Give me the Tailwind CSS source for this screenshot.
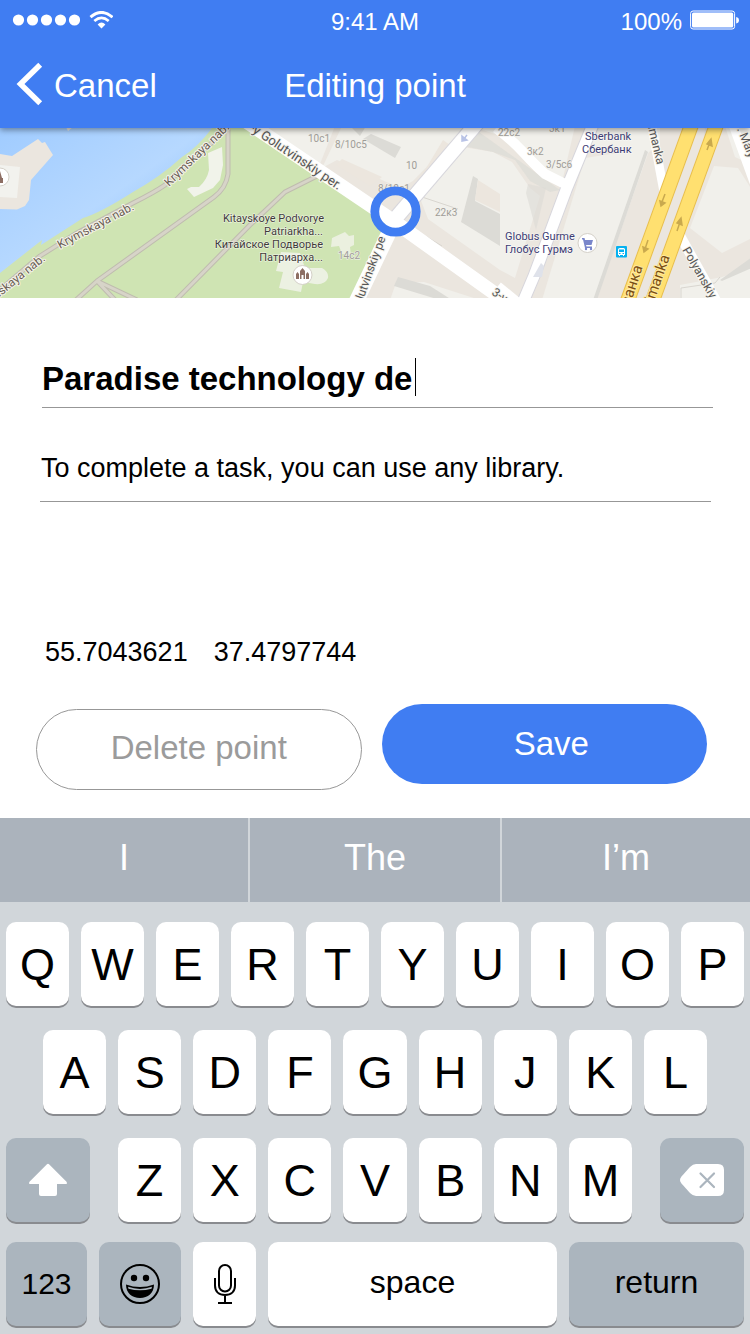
<!DOCTYPE html>
<html lang="en">
<head>
<meta charset="utf-8">
<meta name="viewport" content="width=device-width, initial-scale=1">
<title>Editing point</title>
<script src="https://cdn.jsdelivr.net/npm/@tailwindcss/browser@4"></script>
</head>
<body class="flex min-h-screen flex-col bg-white font-['Liberation_Sans',Arial,sans-serif] text-black">

<header class="relative z-10 flex h-32 flex-col bg-[#407df2] text-white shadow-[0_2px_6px_rgba(0,0,0,0.4)]">
  <div class="grid h-11 grid-cols-[1fr_auto_1fr] items-center px-3 text-[24px] leading-6">
    <div class="flex items-center gap-2 pb-1">
      <svg class="h-3 w-[68px]" viewBox="0 0 68 12" fill="#fff" aria-label="Signal"><circle cx="6.5" cy="6" r="5.6"/><circle cx="20.500" cy="6" r="5.600"/><circle cx="34.500" cy="6" r="5.600"/><circle cx="48.500" cy="6" r="5.600"/><circle cx="62.500" cy="6" r="5.600"/></svg>
      <svg class="h-[18px] w-[25px]" viewBox="0 0 25 18" fill="none" stroke="#fff" aria-label="Wi-Fi"><path d="M2.500 6.200Q13.500-3.400 24.500 6.200" stroke-width="2.900"/><path d="M6.300 10Q13.500 3.800 20.700 10" stroke-width="2.700"/><path d="M9.600 13.500Q13.500 9.700 17.400 13.500L13.500 17.600Z" fill="#fff" stroke="none"/></svg>
    </div>
    <span>9:41 AM</span>
    <div class="flex items-center justify-end gap-2">
      <span>100%</span>
      <svg class="mb-1 -mr-0.5 h-5 w-[50px]" viewBox="0 0 50 20" fill="none" aria-label="Battery full"><rect x=".6" y="1" width="44" height="18" rx="2.500" stroke="#fff"/><rect x="2" y="2.500" width="41.200" height="15" rx="1.500" fill="#fff"/><path d="M46.200 7a3.300 3.300 0 0 1 0 6.500z" fill="#fff"/></svg>
    </div>
  </div>
  <div class="grid h-20 grid-cols-[1fr_auto_1fr] items-center px-4 text-[33px] leading-10">
    <button type="button" class="flex items-center gap-[11px] justify-self-start">
      <svg class="h-[44px] w-[27px]" viewBox="0 0 27 44" fill="none" stroke="#fff" stroke-width="5.500"><path d="M24.200 2.800L4.500 22L24.200 41.200"/></svg>
      <span class="pt-1">Cancel</span>
    </button>
    <h1 class="pt-1">Editing point</h1>
  </div>
</header>

<main class="flex flex-1 flex-col">
  <svg class="h-[170px] w-full" viewBox="0 128 750 170" preserveAspectRatio="xMidYMid slice" font-family="Roboto, sans-serif" role="img" aria-label="Map around the point">
    <defs>
      <linearGradient id="water" x1="0" y1="0" x2="1" y2="1"><stop offset="0" stop-color="#9fcbff"/><stop offset=".5" stop-color="#b6d8ff"/><stop offset=".75" stop-color="#9ac6fb"/></linearGradient>
    </defs>
    <rect y="120" width="750" height="186" fill="#ebe6df"/>
    <!-- park -->
    <path d="M0 120H245L375 212L392 228L358 300H0Z" fill="#cfe4b3"/>
    <!-- river -->
    <path d="M0 120H218Q200 146 182 157Q160 177 133 192Q100 213 83 218L55 236L41 245L42 240L0 273Z" fill="url(#water)"/>
    <path d="M66 127H73L68 131Z" fill="#ebe6df"/>
    <path d="M0 154L12 156L38 139L42 143L45 142L53 155L31 180L29 200L25 206L17 209.500L0 209Z" fill="#ebe6df"/>
    <path d="M0 165L20 167L17 198L0 197Z" fill="#f2f2ee"/>
    <!-- park buildings -->
    <g fill="#f1f3ea"><path d="M187 189L194 197L213 188L220 180L223 165L222 147L208 153L209 170Q207 180 199 187L191 187Z"/>
    <path d="M281 252L300 253L305 268L322 268Q329 272 328 278Q325 285 315 284L303 282L301 292L279 288L283 272L276 271Z" opacity=".85"/>
    <path d="M332 238L345 232L349 236L354 235L354 245L350 247L351 255L342 254L339 246L331 247Z" opacity=".8"/></g>
    <!-- park paths -->
    <g fill="none" stroke="#bfbcaf" stroke-width="5" stroke-linejoin="round"><path d="M-5 294L40 256L75 234L133 203Q155 192 165 185L226 130"/><path d="M228 126V174Q226 188 214 197L97 281L76 300M97 281L137 300M97 281L116 301M176 300L250 225L285 192L319 175"/></g>
    <g fill="none" stroke="#d7d4c8" stroke-width="3" stroke-linejoin="round"><path d="M-5 294L40 256L75 234L133 203Q155 192 165 185L226 130"/><path d="M228 126V174Q226 188 214 197L97 281L76 300M97 281L137 300M97 281L116 301M176 300L250 225L285 192L319 175"/></g>
    <!-- city blocks -->
    <g fill="#f1f0eb">
      <path d="M266 126H335L320 164L280 138Z"/><path d="M342 126H467L413 181L400 188L337 160L322 168Z"/>
      <path d="M420 198L463 147L493 152L512 162L530 188L540 196L515 278L500 270L428 219Z"/>
      <path d="M470 126H560L575 126L563 178L546 170L520 142Z"/>
      <path d="M585 158L650 148L596 300H542Z"/>
      <path d="M600 124H660V144L641 158L620 150L586 152Z"/>
      <path d="M690 228L714 166L738 168L752 190V238L722 253Z"/>
      <path d="M396 283L424 282L480 300H390Z"/>
      <path d="M680 285L722 277L752 267V300H680Z"/>
      <path d="M725 126H752V165L735 157Z"/>
    </g>
    <g fill="#dcdbd6">
      <path d="M363 139L371 134L401 147L395 158Z"/><path d="M350 126H366L360 136Z"/>
      <path d="M472 127L560 190L550 192L530 181L515 160L493 152L463 146Z" opacity=".7"/>
      <path d="M473 176L478 179L475 201L500 214V246L461 222Z"/>
      <path d="M398 277L430 286L452 300H440L394 286Z"/>
      <path d="M528 184L546 188L536 230L526 193Z" opacity=".6"/>
      <path d="M645 150L648 152L597 300H593Z"/>
      <path d="M720 280L752 257V268L722 281Z"/>
      <path d="M705 126H716L702 170Z" opacity=".6"/>
    </g>
    <g fill="#ece6de"><path d="M342 159L382 177L370 186L336 165Z"/><path d="M478 180L500 194V212L475 200Z"/><path d="M425 170L443 140L450 145L415 185Z"/></g>
    <path d="M422 197L458 209M427 237L442 246M681 300V288L715 283L720 277" fill="none" stroke="#d9d6d0"/>
    <!-- white streets -->
    <g fill="none" stroke="#d7d6dc" stroke-width="16" stroke-linejoin="round"><path d="M395 219L478 122" stroke-width="16"/><path d="M594 122L566 190L534 276L523 302" stroke-width="13"/></g>
    <g fill="none" stroke="#fff" stroke-linejoin="round">
      <path d="M241 118L392 220L508 303" stroke-width="14"/><path d="M395 219L478 122" stroke-width="14"/><path d="M394 222L356 302" stroke-width="15"/>
      <path d="M496 128Q512 140 524 153T545 174L565 184" stroke-width="10"/>
      <path d="M594 122L566 190L534 276L523 302" stroke-width="11"/>
      <path d="M651 122L664 192" stroke-width="9"/><path d="M678 232L718 304" stroke-width="10"/><path d="M732 122L755 185" stroke-width="9"/><path d="M498 286L520 304" stroke-width="9"/>
    </g>
    <path d="M533 277L541 263L544 266L542 277Z" fill="#dfe2ea"/>
    <!-- avenue -->
    <g stroke="#e8bf4e" stroke-width="15"><path d="M694 118L626 305M719 118L651 305"/></g>
    <g stroke="#ffe070" stroke-width="13"><path d="M694 118L626 305M719 118L651 305"/></g>
    <g fill="#c9a94e" stroke="#c9a94e" stroke-width="1.500"><path d="M665 194L662 202M660 201L665 203L661 206ZM648 240L645 249M643 247L648 249L644 252ZM677 231L680 222M677 223L681 218L682 225ZM707 150L710 142M707 144L711 139L712 146Z"/><path d="M463 140L467 135M462 136L467 140L462 141Z" fill="#b9c3e6" stroke="#b9c3e6"/></g>
    <!-- street names -->
    <g font-size="12" fill="#6b5f54" stroke="#f5f3ec" stroke-width="2" paint-order="stroke" stroke-linejoin="round">
      <text transform="translate(169 187) rotate(-44)">Krymskaya nab.</text>
      <text transform="translate(60 249) rotate(-28)">Krymskaya nab.</text>
      <text transform="translate(-20 313) rotate(-39)">Krymskaya nab.</text>
      <text transform="translate(249 130) rotate(34)" font-size="13" fill="#555">-y Golutvinskiy per.</text>
      <text transform="translate(358 314) rotate(-70)" fill="#555">Golutvinskiy pe</text>
      <text transform="translate(491 294) rotate(35)" fill="#555">3-y</text>
      <text transform="translate(643 108) rotate(76)" fill="#555">Yakimanka</text>
      <text transform="translate(682 250) rotate(60)" fill="#555">Polyanskiy</text>
      <text transform="translate(737 129) rotate(68)" fill="#555">. Maly</text>
      <g font-size="15" fill="#7a4f12" stroke="#ffe9a0"><text transform="translate(621 334) rotate(-72)">Якиманка</text><text transform="translate(646 326) rotate(-71)">Yakimanka</text></g>
    </g>
    <!-- house numbers -->
    <g font-size="10" fill="#a09d98" stroke="#f1f0eb" stroke-width="1" paint-order="stroke"><text x="308" y="142">10c1</text><text x="335" y="148">8/10c5</text><text x="406" y="169">10</text><text x="378" y="192">8/10c1</text><text x="435" y="216">22к3</text><text x="338" y="259">14c2</text><text x="498" y="136">22c2</text><text x="549" y="132">3к1</text><text x="527" y="155">3к2</text><text x="546" y="168">3/5c6</text></g>
    <!-- places -->
    <g font-size="11" stroke="#fff" stroke-opacity=".7" stroke-width="1" paint-order="stroke">
      <g text-anchor="end" fill="#3f3b39"><text x="324" y="222">Kitayskoye Podvorye</text><text x="323" y="235">Patriarkha...</text><text x="323" y="248">Китайское Подворье</text><text x="323" y="261">Патриарха...</text></g>
      <g fill="#3c3c73"><text x="585" y="140">Sberbank</text><text x="582" y="153">Сбербанк</text><text x="505" y="240">Globus Gurme</text><text x="505" y="253">Глобус Гурмэ</text></g>
    </g>
    <g fill="#fff" stroke="#d4d0c8"><circle cx="0" cy="177" r="9"/><circle cx="302.500" cy="275" r="9.500"/><circle cx="587.500" cy="243" r="9.500"/></g>
    <path d="M0 171L2 178H3V183H-3V178H-2Z" fill="#8d6e63"/>
    <path d="M296 279V274L297.500 272L299 274V279ZM300 279V271L302.500 268L305 271V279H303.500V275H301.500V279ZM306 279V274L307.500 272L309 274V279Z" fill="#8d6e63"/>
    <g fill="#7986cb"><path d="M582 238H584.500L585 240H593L591.500 245H586L586.500 246.500H592V248H585L583 239.500H582Z"/><circle cx="586" cy="249" r="1.200"/><circle cx="591" cy="249" r="1.200"/></g>
    <rect x="616" y="246" width="11" height="11.500" rx="1" fill="#06b1f0"/><path d="M618 255V249.500Q618 248 620 248H623.500Q625 248 625 249.500V255H624V256H623V255H620V256H619V255Z" fill="#fff"/><path d="M619 249.500H624V252H619ZM619 253H620.500V254H619ZM622.500 253H624V254H622.500Z" fill="#06b1f0"/>
    <circle cx="395.500" cy="211.500" r="20.700" fill="none" stroke="#407df2" stroke-width="8.800"/>
  </svg>

  <form class="flex flex-1 flex-col pb-[34px] pl-9 pr-[43px]">
    <div class="mt-12 ml-[6px] -mr-1.5 flex h-[62px] items-center border-b border-[#979797]">
      <label class="sr-only" for="title">Title</label>
      <input id="title" type="text" value="Paradise technology de" class="field-sizing-content pt-1 text-[33px] leading-10 font-bold caret-transparent outline-none">
      <span class="ml-[3px] h-[38px] w-px bg-black" aria-hidden="true"></span>
    </div>
    <div class="mt-8 ml-1 -mr-1 flex h-[62px] items-center border-b border-[#979797] px-px pb-1.5">
      <label class="sr-only" for="description">Description</label>
      <input id="description" type="text" value="To complete a task, you can use any library." class="w-full text-[27px] leading-8 outline-none">
    </div>
    <div class="mt-auto ml-[9px] flex gap-[26px] text-[27px] leading-8">
      <span>55.7043621</span>
      <span>37.4797744</span>
    </div>
    <div class="mt-9 grid h-20 grid-cols-2 items-start gap-5 text-[33px] leading-10">
      <button type="button" class="mt-[5px] h-[81px] rounded-full border border-[#979797] pb-1 text-[#9b9b9b]">Delete point</button>
      <button type="submit" class="h-20 rounded-full bg-[#407df2] pl-3.5 text-white">Save</button>
    </div>
  </form>
</main>

<footer class="bg-[#d1d6da]">
  <div class="grid h-[84px] grid-cols-[248fr_250fr_248fr] gap-0.5 text-[36px] leading-10 text-white [&>button]:bg-[#abb3bc] [&>button]:pb-1">
    <button type="button">I</button>
    <button type="button">The</button>
    <button type="button">I’m</button>
  </div>
  <div class="flex flex-col px-1.5 pt-5 pb-2 text-[45px] leading-none [&_button]:flex [&_button]:h-[84px] [&_button]:items-center [&_button]:justify-center [&_button]:rounded-[10px] [&_button]:shadow-[0_2px_0_#898b8f]">
    <div class="grid grid-cols-10 gap-3 [&>button]:bg-white">
      <button type="button">Q</button><button type="button">W</button><button type="button">E</button><button type="button">R</button><button type="button">T</button><button type="button">Y</button><button type="button">U</button><button type="button">I</button><button type="button">O</button><button type="button">P</button>
    </div>
    <div class="mt-6 grid grid-cols-9 gap-3 px-[37px] [&>button]:bg-white">
      <button type="button">A</button><button type="button">S</button><button type="button">D</button><button type="button">F</button><button type="button">G</button><button type="button">H</button><button type="button">J</button><button type="button">K</button><button type="button">L</button>
    </div>
    <div class="mt-6 flex gap-7">
      <button type="button" class="w-[84px] bg-[#abb5be]" aria-label="Shift"><svg class="h-[34px] w-10" viewBox="0 0 40 34" fill="#fff"><path d="M18.700 1.500Q20 .2 21.300 1.500L38.500 18.700Q39.800 21 37.500 21H29V31Q29 33 27 33H13Q11 33 11 31V21H2.500Q.2 21 1.500 18.700Z"/></svg></button>
      <div class="grid flex-1 grid-cols-7 gap-3 [&>button]:bg-white">
        <button type="button">Z</button><button type="button">X</button><button type="button">C</button><button type="button">V</button><button type="button">B</button><button type="button">N</button><button type="button">M</button>
      </div>
      <button type="button" class="w-[84px] bg-[#abb5be]" aria-label="Backspace"><svg class="h-8 w-11" viewBox="0 0 44 32"><path d="M16 0H38Q44 0 44 6V26Q44 32 38 32H16Q13 32 10 29L1.500 19.500Q-1.500 16 1.500 12.500L10 3Q13 0 16 0Z" fill="#fff"/><path d="M20.500 9.500L34 23M34 9.500L20.500 23" stroke="#abb5be" stroke-width="2.200" stroke-linecap="round"/></svg></button>
    </div>
    <div class="mt-5 flex gap-3 text-[32px]">
      <button type="button" class="w-[81px] bg-[#abb5be] text-[30px]">123</button>
      <button type="button" class="w-[82px] bg-[#abb5be]" aria-label="Emoji"><svg class="h-10 w-10" viewBox="0 0 40 40"><circle cx="20" cy="20" r="19" fill="none" stroke="#000" stroke-width="2"/><circle cx="14" cy="14" r="3.200"/><circle cx="26" cy="14" r="3.200"/><path d="M6 20.500Q20 25.500 34 20.500C34 29 28 34 20 34S6 29 6 20.500Z"/><path d="M8 22.800Q20 27 32 22.800L31.500 24.700Q20 27.800 8.500 24.700Z" fill="#abb5be"/></svg></button>
      <button type="button" class="w-[63px] bg-white" aria-label="Dictate"><svg class="h-10 w-[22px]" viewBox="0 0 22 40" fill="none" stroke="#000" stroke-width="2"><rect x="5" y="1" width="12" height="26.500" rx="6"/><path d="M1 14V21.500C1 27.500 5 31 11 31S21 27.500 21 21.500V14M11 31V39M4 39H18"/></svg></button>
      <button type="button" class="flex-1 bg-white pb-1">space</button>
      <button type="button" class="w-[175px] bg-[#abb5be] pb-1">return</button>
    </div>
  </div>
</footer>
</body>
</html>
